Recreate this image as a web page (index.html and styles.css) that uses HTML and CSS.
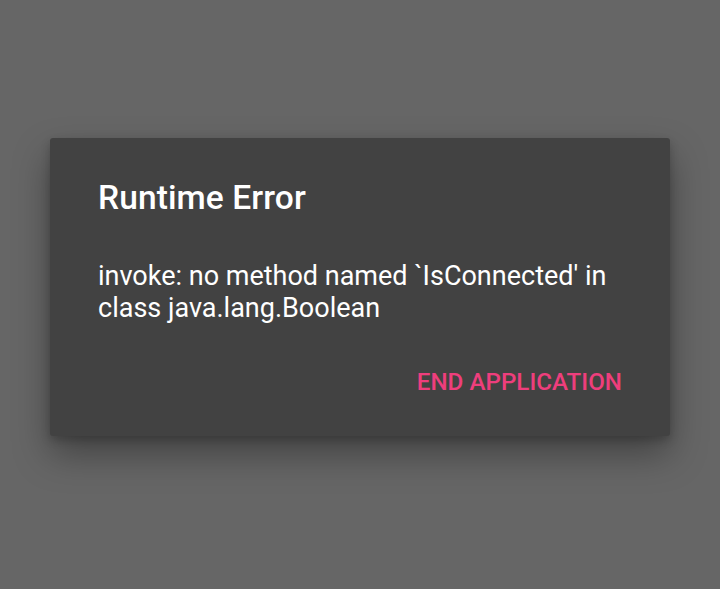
FILE: index.html
```html
<!DOCTYPE html>
<html>
<head>
<meta charset="utf-8">
<link rel="stylesheet" href="styles.css">
</head>
<body>
<div class="screen">
  <div class="dialog">
    <h1 class="title">Runtime Error</h1>
    <p class="message">invoke: no method named `IsConnected' in class java.lang.Boolean</p>
    <div class="actions">
      <span class="btn">END APPLICATION</span>
    </div>
  </div>
</div>
</body>
</html>
```
FILE: styles.css
```css
html, body {
  margin: 0;
  padding: 0;
  background: #666666;
}
.screen {
  width: 720px;
  height: 589px;
  box-sizing: border-box;
  padding: 138px 50px 0 50px;
  font-family: Roboto, "Noto Sans", sans-serif;
}
.dialog {
  background: #424242;
  height: 298px;
  box-sizing: border-box;
  padding: 40px 48px 0 48px;
  border-radius: 3px;
  box-shadow: 0 18px 36px rgba(0,0,0,0.35), 0 4px 10px rgba(0,0,0,0.2);
}
.title {
  margin: 0;
  font-size: 33.5px;
  font-weight: 500;
  letter-spacing: 0.1px;
  color: #ffffff;
  line-height: 40px;
}
.message {
  margin: 42px 0 0 0;
  font-size: 27px;
  line-height: 32px;
  color: #ffffff;
}
.actions {
  display: flex;
  justify-content: flex-end;
  margin-top: 43px;
}
.btn {
  font-size: 24.2px;
  font-weight: 500;
  color: #ee3e7c;
  line-height: 30px;
}
```
